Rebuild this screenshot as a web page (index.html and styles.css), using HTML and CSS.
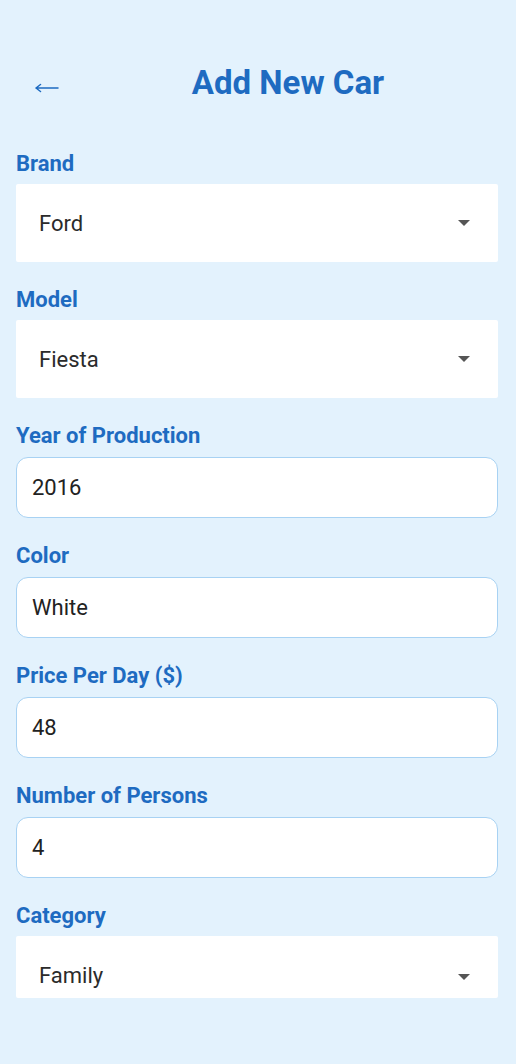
FILE: index.html
```html
<!DOCTYPE html>
<html>
<head>
<meta charset="utf-8">
<link rel="stylesheet" href="styles.css">
</head>
<body>
<div class="page">
  <header class="header">
    <span class="back">
      <svg width="24" height="10" viewBox="0 0 24 10"><path d="M1 5H23M1 5L5.5 1.5M1 5L5.5 8.5" stroke="#1e6bc1" stroke-width="1.5" fill="none" stroke-linecap="round"/></svg>
    </span>
    <h1 class="title">Add New Car</h1>
  </header>

  <div class="field">
    <div class="label">Brand</div>
    <div class="select"><span>Ford</span><span class="caret"></span></div>
  </div>
  <div class="field">
    <div class="label">Model</div>
    <div class="select"><span>Fiesta</span><span class="caret"></span></div>
  </div>
  <div class="field">
    <div class="label">Year of Production</div>
    <div class="input">2016</div>
  </div>
  <div class="field">
    <div class="label">Color</div>
    <div class="input">White</div>
  </div>
  <div class="field">
    <div class="label">Price Per Day ($)</div>
    <div class="input">48</div>
  </div>
  <div class="field">
    <div class="label">Number of Persons</div>
    <div class="input">4</div>
  </div>
  <div class="field">
    <div class="label">Category</div>
    <div class="select clipped"><span>Family</span><span class="caret"></span></div>
  </div>
</div>
</body>
</html>
```
FILE: styles.css
```css
html, body {
  margin: 0;
  padding: 0;
  background: #e3f2fd;
}
body {
  font-family: Roboto, "Noto Sans", sans-serif;
  width: 516px;
  height: 1064px;
  overflow: hidden;
}
.page {
  padding: 0 18px 0 16px;
}
.header {
  position: relative;
  height: 152px;
  display: flex;
  justify-content: center;
}
.back {
  position: absolute;
  left: 19px;
  top: 83px;
  line-height: 0;
}
.title {
  margin: 64px 0 0 62px;
  font-size: 33px;
  line-height: 38px;
  font-weight: 700;
  color: #1e6bc1;
}
.field {
  margin-bottom: 26px;
}
.label {
  font-size: 22px;
  line-height: 24px;
  font-weight: 700;
  color: #1e6bc1;
  margin-bottom: 8px;
}
.select {
  height: 78px;
  background: #fff;
  border-radius: 2px;
  display: flex;
  align-items: center;
  justify-content: space-between;
  padding: 0 28px 0 23px;
  font-size: 22px;
  color: #2b2b2b;
  box-sizing: border-box;
}
.select.clipped {
  height: 62px;
  align-items: flex-start;
  padding-top: 27px;
}
.select.clipped .caret {
  margin-top: 11px;
}
.caret {
  width: 0;
  height: 0;
  border-left: 6px solid transparent;
  border-right: 6px solid transparent;
  border-top: 6px solid #555;
}
.input {
  height: 61px;
  box-sizing: border-box;
  background: #fff;
  border: 1.5px solid #a8d2f3;
  border-radius: 12px;
  display: flex;
  align-items: center;
  padding-left: 15px;
  font-size: 22px;
  color: #222;
}
.field:has(.input) .label {
  margin-bottom: 9px;
}
```
